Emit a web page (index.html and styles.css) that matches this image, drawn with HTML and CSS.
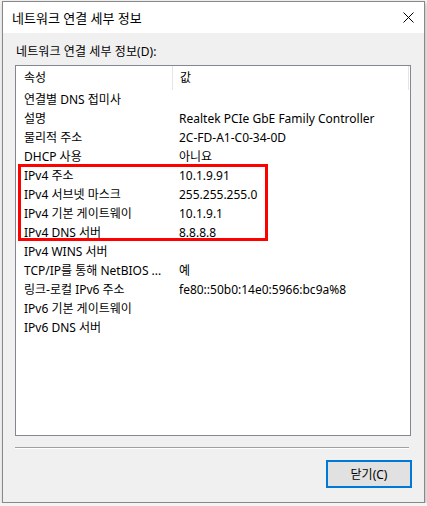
FILE: index.html
```html
<!DOCTYPE html>
<html lang="ko">
<head>
    <meta charset="UTF-8">
    <title>네트워크 연결 세부 정보</title>
    <link rel="stylesheet" href="styles.css">
</head>
<body>
    <div class="window">
        <div class="titlebar">
            <span class="title">네트워크 연결 세부 정보</span>
            <span class="close">
                <svg width="11" height="11" viewBox="0 0 11 11">
                    <path d="M0.5 0.5 L10.5 10.5 M10.5 0.5 L0.5 10.5" stroke="#000" stroke-width="1" fill="none"/>
                </svg>
            </span>
        </div>
        <div class="content">
            <div class="label">네트워크 연결 세부 정보(D):</div>
            <div class="listbox">
                <div class="head">
                    <div class="col-name">속성</div>
                    <div class="col-value">값</div>
                </div>
                <div class="row"><div class="col-name">연결별 DNS 접미사</div><div class="col-value"></div></div>
                <div class="row"><div class="col-name">설명</div><div class="col-value">Realtek PCIe GbE Family Controller</div></div>
                <div class="row"><div class="col-name">물리적 주소</div><div class="col-value">2C-FD-A1-C0-34-0D</div></div>
                <div class="row"><div class="col-name">DHCP 사용</div><div class="col-value">아니요</div></div>
                <div class="row"><div class="col-name">IPv4 주소</div><div class="col-value">10.1.9.91</div></div>
                <div class="row"><div class="col-name">IPv4 서브넷 마스크</div><div class="col-value">255.255.255.0</div></div>
                <div class="row"><div class="col-name">IPv4 기본 게이트웨이</div><div class="col-value">10.1.9.1</div></div>
                <div class="row"><div class="col-name">IPv4 DNS 서버</div><div class="col-value">8.8.8.8</div></div>
                <div class="row"><div class="col-name">IPv4 WINS 서버</div><div class="col-value"></div></div>
                <div class="row"><div class="col-name">TCP/IP를 통해 NetBIOS ...</div><div class="col-value">예</div></div>
                <div class="row"><div class="col-name">링크-로컬 IPv6 주소</div><div class="col-value">fe80::50b0:14e0:5966:bc9a%8</div></div>
                <div class="row"><div class="col-name">IPv6 기본 게이트웨이</div><div class="col-value"></div></div>
                <div class="row"><div class="col-name">IPv6 DNS 서버</div><div class="col-value"></div></div>
                <div class="highlight"></div>
            </div>
            <div class="separator"></div>
            <div class="buttons">
                <button class="btn">닫기(C)</button>
            </div>
        </div>
    </div>
</body>
</html>
```

FILE: styles.css
```css
body {
    margin: 0;
    background-color: #f4f4f4;
    font-family: "Noto Sans", "Noto Sans CJK KR", sans-serif;
    font-size: 12px;
    color: #000;
}

.window {
    margin: 1px 0 0 2px;
    width: 421px;
    height: 500px;
    border: 1px solid #888;
    background-color: #f0f0f0;
    box-shadow: 1px 2px 4px rgba(0, 0, 0, 0.25);
    display: flex;
    flex-direction: column;
}

.titlebar {
    height: 31px;
    background-color: #fff;
    display: flex;
    align-items: center;
    justify-content: space-between;
    padding: 0 10px 0 9px;
    font-size: 13px;
}

.close {
    display: flex;
}

.content {
    flex: 1;
    padding: 11px 13px 0 12px;
    display: flex;
    flex-direction: column;
}

.label {
    height: 16px;
    line-height: 16px;
    padding-left: 1px;
    letter-spacing: 0.1px;
}

.listbox {
    position: relative;
    margin-top: 5px;
    height: 369px;
    border: 1px solid #828790;
    background-color: #fff;
}

.head, .row {
    display: flex;
}

.head {
    height: 24px;
    line-height: 23px;
}

.head .col-name {
    border-right: 1px solid #e5e5e5;
}

.head .col-value {
    flex: 1;
    border-right: 1px solid #e5e5e5;
    margin-right: 1px;
}

.row {
    height: 19px;
    line-height: 19px;
}

.col-name {
    width: 148px;
    padding-left: 8px;
    white-space: nowrap;
    overflow: hidden;
}

.col-value {
    padding-left: 7px;
    white-space: nowrap;
}

.highlight {
    position: absolute;
    left: 2px;
    top: 98px;
    width: 244px;
    height: 71px;
    border: 3px solid #f00;
}

.separator {
    margin-top: 11px;
    height: 1px;
    border-top: 1px solid #a0a0a0;
    background-color: #fff;
    margin-right: 2px;
}

.buttons {
    display: flex;
    justify-content: flex-end;
    margin-top: 11px;
}

.btn {
    width: 86px;
    height: 28px;
    margin-right: -1px;
    border: 2px solid #0078d7;
    background-color: #e1e1e1;
    font-family: "Noto Sans", "Noto Sans CJK KR", sans-serif;
    font-size: 12px;
    color: #000;
    padding: 0;
}
```
